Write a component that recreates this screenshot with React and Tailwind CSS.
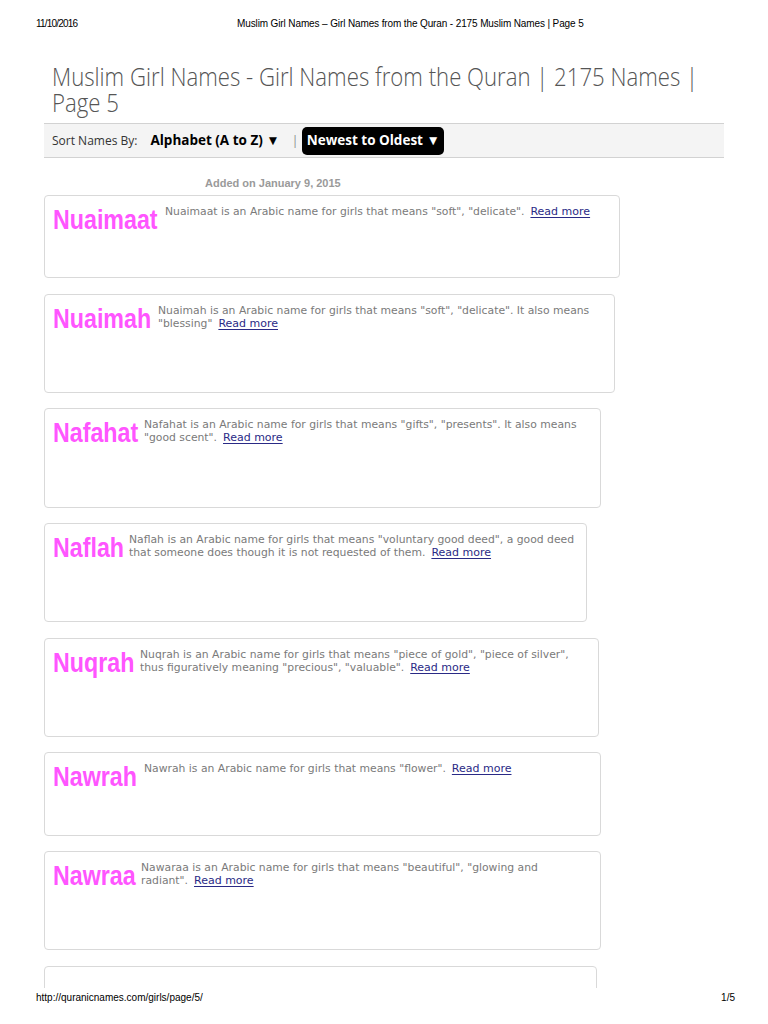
import React from "react";

const cards = [
  {
    name: "Nuaimaat",
    nameBox: "w-[105px]",
    box: "w-[576px] h-[83px] mb-[16px]",
    lines: [],
    last: 'Nuaimaat is an Arabic name for girls that means "soft", "delicate".',
  },
  {
    name: "Nuaimah",
    nameBox: "w-[98px]",
    box: "w-[571px] h-[99px] mb-[15px]",
    lines: ['Nuaimah is an Arabic name for girls that means "soft", "delicate". It also means'],
    last: '"blessing"',
  },
  {
    name: "Nafahat",
    nameBox: "w-[84px]",
    box: "w-[557px] h-[100px] mb-[15px]",
    lines: ['Nafahat is an Arabic name for girls that means "gifts", "presents". It also means'],
    last: '"good scent".',
  },
  {
    name: "Naflah",
    nameBox: "w-[69px]",
    box: "w-[543px] h-[99px] mb-[16px]",
    lines: ['Naflah is an Arabic name for girls that means "voluntary good deed", a good deed'],
    last: "that someone does though it is not requested of them.",
  },
  {
    name: "Nuqrah",
    nameBox: "w-[80px]",
    box: "w-[555px] h-[99px] mb-[15px]",
    lines: ['Nuqrah is an Arabic name for girls that means "piece of gold", "piece of silver",'],
    last: 'thus figuratively meaning "precious", "valuable".',
  },
  {
    name: "Nawrah",
    nameBox: "w-[84px]",
    box: "w-[557px] h-[84px] mb-[15px]",
    lines: [],
    last: 'Nawrah is an Arabic name for girls that means "flower".',
  },
  {
    name: "Nawraa",
    nameBox: "w-[81px]",
    box: "w-[557px] h-[99px] mb-[16px]",
    lines: ['Nawaraa is an Arabic name for girls that means "beautiful", "glowing and'],
    last: 'radiant".',
  },
];

function Card({ c }) {
  return (
    <div className={`${c.box} shrink-0 border border-[#d9d9d9] rounded-[4px] bg-white flex items-start pl-[8px] pt-[9px]`}>
      <div className={`${c.nameBox} mt-[1px] mr-[7px] shrink-0 whitespace-nowrap text-[28px] leading-[28px] font-bold text-[#ff55ff] font-['Liberation_Sans',Arial,sans-serif]`}>
        <span className="inline-block origin-left scale-x-[0.83]">{c.name}</span>
      </div>
      <div className="text-[10.8px] leading-[13px] text-[#7a7a7a] font-['DejaVu_Sans',sans-serif] whitespace-nowrap">
        {c.lines.map((l, i) => (
          <div key={i}>{l}</div>
        ))}
        <div>
          {c.last}
          <a href="#" className="ml-[6px] text-[11px] text-[#2a2a86] underline underline-offset-[2px]">
            Read more
          </a>
        </div>
      </div>
    </div>
  );
}

export default function App() {
  return (
    <div className="w-[768px] h-[1024px] bg-white flex flex-col overflow-hidden">
      <header className="h-[48px] shrink-0 flex items-start pt-[18px] pl-[36px] text-[10px] leading-[12px] text-black font-['Liberation_Sans',Arial,sans-serif]">
        <span className="w-[201px] shrink-0 tracking-[-0.8px]">11/10/2016</span>
        <span className="tracking-[-0.12px]">Muslim Girl Names – Girl Names from the Quran - 2175 Muslim Names | Page 5</span>
      </header>

      <main className="flex-1 overflow-hidden pl-[44px] pt-[15px] flex flex-col">
        <h1 className="pl-[8px] w-[680px] whitespace-nowrap text-[26px] leading-[26px] font-light text-[#555555] font-['Open_Sans',sans-serif]">
          <span className="inline-block origin-left scale-x-[0.853]">
            Muslim Girl Names - Girl Names from the Quran | 2175 Names |<br />
            Page 5
          </span>
        </h1>

        <div className="mt-[8px] w-[680px] h-[35px] shrink-0 bg-[#f4f4f4] border-y border-[#d2d2d2] flex items-center pl-[8px] font-['Open_Sans',sans-serif]">
          <span className="text-[12px] text-[#333333]">Sort Names By:</span>
          <span className="ml-[13px] text-[13.5px] font-bold text-black">Alphabet (A to Z) ▼</span>
          <span className="ml-[12px] text-[12px] text-[#888888]">|</span>
          <span className="ml-[4px] h-[28px] w-[142px] rounded-[5px] bg-black text-white text-[13.5px] font-bold flex items-center justify-center">
            Newest to Oldest ▼
          </span>
        </div>

        <div className="mt-[18px] mb-[5px] pl-[161px] text-[11px] leading-[14px] font-bold text-[#9a9a9a] font-['Liberation_Sans',Arial,sans-serif]">
          Added on January 9, 2015
        </div>

        {cards.map((c) => (
          <Card key={c.name} c={c} />
        ))}
        <div className="w-[553px] h-[99px] shrink-0 border border-[#d9d9d9] rounded-[4px] bg-white" />
      </main>

      <footer className="h-[36px] shrink-0 flex items-start justify-between pt-[4px] pl-[36px] pr-[33px] text-[10px] leading-[12px] text-black font-['Liberation_Sans',Arial,sans-serif]">
        <span>http://quranicnames.com/girls/page/5/</span>
        <span>1/5</span>
      </footer>
    </div>
  );
}
